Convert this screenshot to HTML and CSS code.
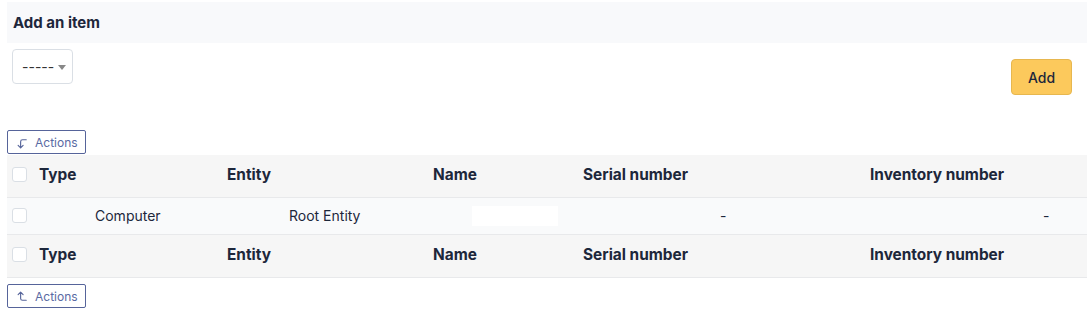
FILE: index.html
```html
<!DOCTYPE html>
<html lang="en">

<head>
    <meta charset="UTF-8">
    <title>Add an item</title>
    <link rel="stylesheet" href="styles.css">
</head>

<body>

    <div class="section-head">Add an item</div>

    <div class="add-row">
        <div class="select">
            <span class="select-text">-----</span>
            <span class="caret"></span>
        </div>
        <button class="btn-add">Add</button>
    </div>

    <button class="btn-actions top-actions">
        <svg viewBox="0 0 24 24" class="icon"><path d="M18 6h-6a3 3 0 0 0 -3 3v10l-4 -4m4 4l4 -4"/></svg>
        Actions
    </button>

    <div class="grid-table">
        <div class="row head-row">
            <div class="cell first"><span class="check"></span>Type</div>
            <div class="cell">Entity</div>
            <div class="cell">Name</div>
            <div class="cell">Serial number</div>
            <div class="cell">Inventory number</div>
        </div>
        <div class="row data-row">
            <div class="cell"><span class="check"></span></div>
            <div class="cell">Computer</div>
            <div class="cell">Root Entity</div>
            <div class="cell"><span class="blank"></span></div>
            <div class="cell">-</div>
            <div class="cell">-</div>
        </div>
        <div class="row head-row">
            <div class="cell first"><span class="check"></span>Type</div>
            <div class="cell">Entity</div>
            <div class="cell">Name</div>
            <div class="cell">Serial number</div>
            <div class="cell">Inventory number</div>
        </div>
    </div>

    <button class="btn-actions bottom-actions">
        <svg viewBox="0 0 24 24" class="icon"><path d="M18 18h-6a3 3 0 0 1 -3 -3v-10l-4 4m4 -4l4 4"/></svg>
        Actions
    </button>

</body>

</html>
```

FILE: styles.css
```css
* {
    margin: 0;
    padding: 0;
    box-sizing: border-box;
}

body {
    font-family: "Inter", "Noto Sans", sans-serif;
    font-size: 14px;
    color: #1d273b;
    background: #fff;
    padding: 2px 0 0 7px;
}

/* header band */
.section-head {
    height: 41px;
    background: #f8f9fb;
    padding-left: 6px;
    display: flex;
    align-items: center;
    font-size: 15px;
    font-weight: 700;
}

/* select + add button */
.add-row {
    display: flex;
    justify-content: space-between;
    align-items: flex-start;
    padding: 6px 15px 0 5px;
}

.select {
    width: 61px;
    height: 35px;
    border: 1px solid #dadfe5;
    border-radius: 4px;
    display: flex;
    align-items: center;
    padding-left: 9px;
    gap: 4px;
}

.select-text {
    font-size: 14px;
    color: #333;
}

.caret {
    width: 0;
    height: 0;
    border-left: 4px solid transparent;
    border-right: 4px solid transparent;
    border-top: 5px solid #888;
    margin-top: 2px;
}

.btn-add {
    margin-top: 10px;
    width: 61px;
    height: 36px;
    background: #fcc95c;
    border: 1px solid #e7b74f;
    border-radius: 4px;
    font-family: inherit;
    font-size: 14px;
    font-weight: 500;
    color: #1d273b;
}

/* actions buttons */
.btn-actions {
    display: flex;
    align-items: center;
    gap: 5px;
    width: 79px;
    height: 24px;
    padding-left: 7px;
    background: #fff;
    border: 1px solid #56649a;
    border-radius: 2px;
    font-family: inherit;
    font-size: 12px;
    color: #5a6aa3;
}

.top-actions {
    margin-top: 35px;
}

.bottom-actions {
    margin-top: 6px;
}

.icon {
    width: 15px;
    height: 15px;
    fill: none;
    stroke: #56649a;
    stroke-width: 1.8;
    stroke-linecap: round;
    stroke-linejoin: round;
}

.top-actions .icon {
    margin-top: 3px;
}

.bottom-actions .icon {
    margin-top: 1px;
}

/* table */
.grid-table {
    margin-top: 1px;
}

.row {
    display: grid;
    align-items: center;
    border-bottom: 1px solid #e8e9eb;
}

.head-row {
    grid-template-columns: 214px 206px 150px 287px 223px;
    height: 43px;
    padding-bottom: 3px;
    background: #f6f6f6;
    font-size: 15.4px;
    font-weight: 700;
}

.head-row .cell {
    padding-left: 6px;
}

.head-row .cell.first {
    display: flex;
    align-items: center;
    padding-left: 5px;
}

.head-row .check {
    margin-right: 12px;
}

.data-row {
    grid-template-columns: 88px 194px 183px 248px 323px 44px;
    height: 37px;
    padding-bottom: 2px;
    background: #f9fafb;
}

.data-row .cell:first-child {
    padding-left: 5px;
    display: flex;
}

.check {
    display: inline-block;
    width: 15px;
    height: 15px;
    border: 1px solid #dadfe5;
    border-radius: 3px;
    background: #fff;
}

.blank {
    display: block;
    width: 86px;
    height: 20px;
    background: #fff;
    margin-top: 2px;
}
```
